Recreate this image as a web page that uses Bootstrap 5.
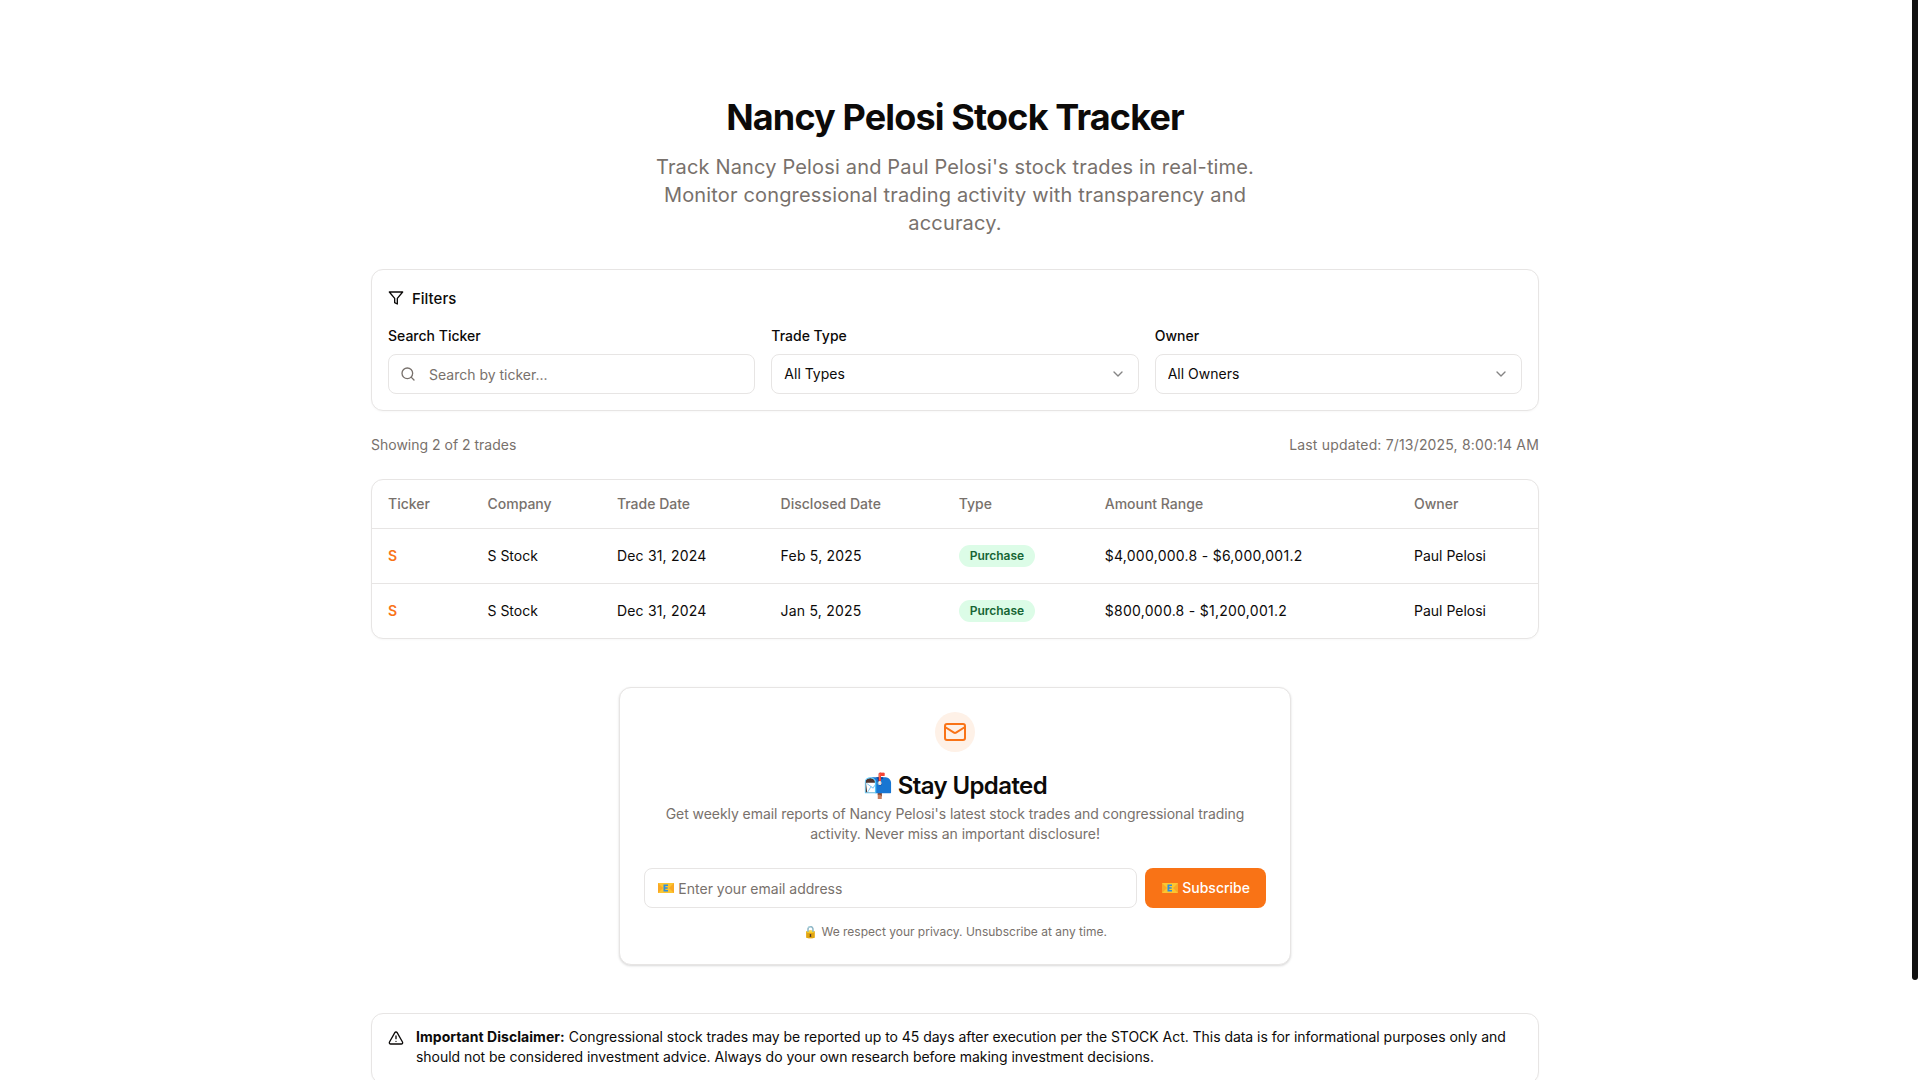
<!DOCTYPE html>
<html lang="en">
<head>
<meta charset="utf-8">
<title>Nancy Pelosi Stock Tracker</title>
<link href="https://cdn.jsdelivr.net/npm/bootstrap@5.3.0/dist/css/bootstrap.min.css" rel="stylesheet">
<style>
body{font-family:Inter,"Noto Color Emoji",sans-serif;color:#0c0a09;background:#fff;font-size:14px;line-height:20px;padding-right:10px}
.scroll-thumb{position:fixed;top:0;right:2px;width:6px;height:980px;background:#111;border-radius:0 0 3px 3px}
.shell{width:1168px;margin:0 auto;padding:97px 0 103px}
.hero-title{font-size:36px;line-height:40px;font-weight:700;letter-spacing:-.85px;margin:0 0 16px;color:#0c0a09}
.hero-sub{font-size:20px;line-height:28px;letter-spacing:.16px;color:#78716c;max-width:612px;margin:0 auto 32px}
.panel{border:1px solid #e7e5e4;border-radius:12px;box-shadow:0 1px 2px rgba(0,0,0,.03);background:#fff;--bs-card-border-color:#e7e5e4}
.filter-head{font-size:15px;line-height:24px;height:24px;font-weight:500;margin-bottom:16px}
.filter-head span{padding-top:1px}
.field-label{font-size:14px;line-height:20px;font-weight:500;margin-bottom:8px;display:block}
.form-control.tall,.form-select.tall{height:40px;border:1px solid #e7e5e4;border-radius:8px;font-size:14px;line-height:20px;color:#0c0a09;box-shadow:none}
.form-control.tall::placeholder{color:#78716c;opacity:1}
.form-control.tall{padding:8px 12px}
.form-control.pad-icon{padding-left:40px}
.form-select.tall{padding:8px 36px 8px 12px;background-position:right 12px center;background-size:16px 16px;background-image:url("data:image/svg+xml,%3csvg xmlns='http://www.w3.org/2000/svg' viewBox='0 0 24 24' fill='none' stroke='%230c0a09' stroke-opacity='.5' stroke-width='2' stroke-linecap='round' stroke-linejoin='round'%3e%3cpath d='m6 9 6 6 6-6'/%3e%3c/svg%3e")}
.search-ico{position:absolute;left:12px;top:12px;color:#78716c}
.muted-ink{color:#78716c}
.stamp{letter-spacing:.17px}
.meta-row{margin:24px 0;line-height:20px}
.trade-table{margin:0;--bs-table-border-color:#e7e5e4;font-size:14px;color:#0c0a09}
.trade-table th{font-weight:500;color:#78716c;padding:0 16px;height:48px;line-height:20px;white-space:nowrap;vertical-align:middle}
.trade-table td{padding:0 16px;height:55px;line-height:20px;vertical-align:middle;white-space:nowrap}
.trade-table tr:last-child td{border-bottom:0}
.ticker-cell{font-weight:600;color:#f97316}
.date-cell{letter-spacing:.2px}
.money-cell{letter-spacing:.27px}
.buy-pill{background:#dcfce7;color:#166534;font-size:12px;line-height:16px;font-weight:600;padding:3px 11px;border-radius:999px;display:inline-block;vertical-align:middle}
.sub-card{width:672px;margin:48px auto;padding:24px;box-shadow:0 1px 3px rgba(0,0,0,.1),0 1px 2px rgba(0,0,0,.06)}
.mail-dot{width:40px;height:40px;border-radius:50%;background:#fef1e7;color:#f97316;margin:0 auto 16px}
.sub-title{font-size:24px;line-height:32px;font-weight:600;letter-spacing:-.6px;margin:2px 0 0}
.sub-copy{color:#78716c;margin:2px 0 24px;letter-spacing:-.06px}
.btn-sub{background:#f97316;border:0;color:#fff;font-size:14px;line-height:20px;font-weight:500;height:40px;padding:0 16px;border-radius:8px;white-space:nowrap}
.btn-sub:hover{background:#f97316;color:#fff}
.emo-holder{position:relative;display:inline-block}
.emo-cover{position:absolute;left:0;top:50%;width:17px;height:14px;margin-top:-7px;display:block}
.emo-input{left:13px}
.fine{font-size:12px;line-height:16px;color:#78716c;margin:16px 0 0}
.note-card{padding:13px 16px 16px;letter-spacing:-.04px}
.note-card strong{letter-spacing:.05px}
.alert-ico{margin-top:3px;flex:none}
</style>
</head>
<body>
<div class="scroll-thumb"></div>
<main class="shell">
  <header class="text-center">
    <h1 class="hero-title">Nancy Pelosi Stock Tracker</h1>
    <p class="hero-sub">Track Nancy Pelosi and Paul Pelosi's stock trades in real-time. Monitor congressional trading activity with transparency and accuracy.</p>
  </header>

  <section class="card panel p-3">
    <div class="filter-head d-flex align-items-center gap-2">
      <svg width="16" height="16" viewBox="0 0 24 24" fill="none" stroke="currentColor" stroke-width="2" stroke-linecap="round" stroke-linejoin="round"><polygon points="22 3 2 3 10 12.46 10 19 14 21 14 12.46 22 3"/></svg>
      <span>Filters</span>
    </div>
    <div class="row g-3">
      <div class="col-4">
        <label class="field-label" for="tk">Search Ticker</label>
        <div class="position-relative">
          <svg class="search-ico" width="16" height="16" viewBox="0 0 24 24" fill="none" stroke="currentColor" stroke-width="2" stroke-linecap="round" stroke-linejoin="round"><circle cx="11" cy="11" r="8"/><path d="m21 21-4.3-4.3"/></svg>
          <input id="tk" class="form-control tall pad-icon" placeholder="Search by ticker...">
        </div>
      </div>
      <div class="col-4">
        <label class="field-label" for="ty">Trade Type</label>
        <select id="ty" class="form-select tall"><option>All Types</option></select>
      </div>
      <div class="col-4">
        <label class="field-label" for="ow">Owner</label>
        <select id="ow" class="form-select tall"><option>All Owners</option></select>
      </div>
    </div>
  </section>

  <div class="meta-row d-flex justify-content-between muted-ink">
    <span>Showing 2 of 2 trades</span>
    <span class="stamp">Last updated: 7/13/2025, 8:00:14 AM</span>
  </div>

  <section class="card panel overflow-hidden">
    <table class="table trade-table">
      <thead>
        <tr><th>Ticker</th><th>Company</th><th>Trade Date</th><th>Disclosed Date</th><th>Type</th><th>Amount Range</th><th>Owner</th></tr>
      </thead>
      <tbody>
        <tr><td class="ticker-cell">S</td><td>S Stock</td><td class="date-cell">Dec 31, 2024</td><td class="date-cell">Feb 5, 2025</td><td><span class="buy-pill">Purchase</span></td><td class="money-cell">$4,000,000.8 - $6,000,001.2</td><td>Paul Pelosi</td></tr>
        <tr><td class="ticker-cell">S</td><td>S Stock</td><td class="date-cell">Dec 31, 2024</td><td class="date-cell">Jan 5, 2025</td><td><span class="buy-pill">Purchase</span></td><td class="money-cell">$800,000.8 - $1,200,001.2</td><td>Paul Pelosi</td></tr>
      </tbody>
    </table>
  </section>

  <section class="card panel sub-card text-center">
    <div class="mail-dot d-flex align-items-center justify-content-center">
      <svg width="24" height="24" viewBox="0 0 24 24" fill="none" stroke="currentColor" stroke-width="2" stroke-linecap="round" stroke-linejoin="round"><rect width="20" height="16" x="2" y="4" rx="2"/><path d="m22 7-8.97 5.7a1.94 1.94 0 0 1-2.06 0L2 7"/></svg>
    </div>
    <h2 class="sub-title">📬 Stay Updated</h2>
    <p class="sub-copy">Get weekly email reports of Nancy Pelosi's latest stock trades and congressional trading activity. Never miss an important disclosure!</p>
    <form class="d-flex gap-2">
      <div class="position-relative flex-grow-1">
        <input class="form-control tall" placeholder="📧 Enter your email address">
        <svg class="emo-cover emo-input" viewBox="0 0 17 14" aria-hidden="true"><rect width="17" height="14" fill="#fff"/><rect x="1" y="2" width="16" height="10" fill="#fcc530"/><path d="M1 2l5 5-5 5zM17 2l-5 5 5 5z" fill="#f9a825"/><path d="M6.5 3.5h4.5v1.6H8.3v1.1h2.4v1.6H8.3v1.1H11v1.6H6.5z" fill="#2f8fdc"/></svg>
      </div>
      <button type="button" class="btn btn-sub"><span class="emo-holder">📧<svg class="emo-cover" viewBox="0 0 17 14" aria-hidden="true"><rect width="17" height="14" fill="#f97316"/><rect x="1" y="2" width="16" height="10" fill="#fcc530"/><path d="M1 2l5 5-5 5zM17 2l-5 5 5 5z" fill="#f9a825"/><path d="M6.5 3.5h4.5v1.6H8.3v1.1h2.4v1.6H8.3v1.1H11v1.6H6.5z" fill="#2f8fdc"/></svg></span> Subscribe</button>
    </form>
    <p class="fine">🔒 We respect your privacy. Unsubscribe at any time.</p>
  </section>

  <section class="card panel note-card">
    <div class="d-flex gap-2 align-items-start">
      <svg class="alert-ico me-1" width="16" height="16" viewBox="0 0 24 24" fill="none" stroke="currentColor" stroke-width="2" stroke-linecap="round" stroke-linejoin="round"><path d="m21.73 18-8-14a2 2 0 0 0-3.48 0l-8 14A2 2 0 0 0 4 21h16a2 2 0 0 0 1.73-3Z"/><path d="M12 9v4"/><path d="M12 17h.01"/></svg>
      <div><strong class="fw-bold">Important Disclaimer:</strong> Congressional stock trades may be reported up to 45 days after execution per the STOCK Act. This data is for informational purposes only and should not be considered investment advice. Always do your own research before making investment decisions.</div>
    </div>
  </section>
</main>
</body>
</html>
